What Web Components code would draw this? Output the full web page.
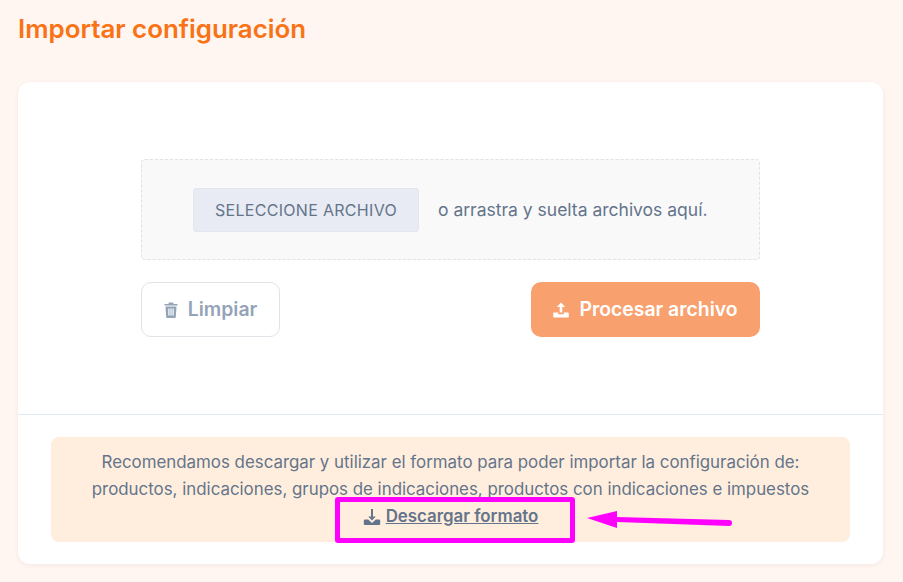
<!doctype html>
<html>
  <head>
    <style>
      html, body { margin: 0; height: 100%; }
      body { background: #fff5f1; font-family: Inter, "Liberation Sans", sans-serif; }
    </style>
  </head>
  <body>
    <template id="import-page">
      <style>
        :host { display: block; padding: 0 20px 18px 18px; position: relative; height: 582px; box-sizing: border-box; }
        h1 { margin: 0; height: 82px; padding-top: 13px; box-sizing: border-box; font-size: 25.9px; line-height: 32px; font-weight: 600; color: #f97316; }
      </style>
      <h1>Importar configuración</h1>
      <import-card></import-card>
    </template>

    <template id="import-card">
      <style>
        :host { display: block; background: #fff; border-radius: 12px; box-shadow: 0 1px 4px rgba(120, 90, 70, .08); height: 482px; position: relative; }
        .top { height: 333px; box-sizing: border-box; padding: 77px 123px 0; border-bottom: 1px solid #e2e8f0; }
        .actions { display: flex; justify-content: space-between; margin-top: 22px; }
        .bottom { padding: 22px 33px; }
      </style>
      <div class="top">
        <drop-zone></drop-zone>
        <div class="actions">
          <action-button kind="clear">Limpiar</action-button>
          <action-button kind="process">Procesar archivo</action-button>
        </div>
      </div>
      <div class="bottom">
        <format-notice></format-notice>
      </div>
    </template>

    <template id="drop-zone">
      <style>
        :host { display: flex; align-items: center; box-sizing: border-box; height: 101px; padding-left: 51px; background: #f9f9f9; border: 1px dashed #e2e2e6; border-radius: 4px; font-size: 17.5px; color: #64748b; }
        button { all: unset; box-sizing: border-box; width: 226px; height: 44px; text-align: center; line-height: 42px; background: #e8ebf3; border: 1px solid #e2e6ee; border-radius: 3px; font-size: 16px; letter-spacing: .3px; color: #64748b; }
        span { margin-left: 19px; }
      </style>
      <button>SELECCIONE ARCHIVO</button>
      <span>o arrastra y suelta archivos aquí.</span>
    </template>

    <template id="action-button">
      <style>
        :host { display: inline-flex; align-items: center; justify-content: center; box-sizing: border-box; height: 55px; padding-bottom: 2px; gap: 10px; border-radius: 10px; font-size: 19.4px; font-weight: 600; }
        :host([kind=clear]) { width: 139px; background: #fff; border: 1px solid #e2e2e8; color: #94a3b8; }
        :host([kind=process]) { width: 229px; background: #f9a06f; color: #fff; }
        svg { width: 16px; height: 16px; fill: currentColor; display: block; margin-top: 2px; }
        :host([kind=clear]) svg { width: 14px; height: 16px; }
      </style>
      <svg id="icon" viewBox="0 0 16 16"></svg>
      <slot></slot>
    </template>

    <template id="format-notice">
      <style>
        :host { display: block; background: #ffeedd; border-radius: 8px; height: 105px; box-sizing: border-box; padding-top: 12px; text-align: center; font-size: 16.87px; line-height: 27px; color: #64748b; position: relative; }
        p { margin: 0; white-space: nowrap; }
        a { display: inline-flex; align-items: center; gap: 5px; font-weight: 600; color: #64748b; }
        a span { text-decoration: underline; }
        svg { width: 18px; height: 18px; fill: currentColor; }
        .mark { position: absolute; left: 284px; top: 60px; width: 240px; height: 46px; box-sizing: border-box; border: 5px solid #ff00ff; border-radius: 3px; }
        .arrow { position: absolute; left: 530px; top: 64px; width: 160px; height: 30px; }
      </style>
      <p>Recomendamos descargar y utilizar el formato para poder importar la configuración de:<br>productos, indicaciones, grupos de indicaciones, productos con indicaciones e impuestos</p>
      <a>
        <svg viewBox="0 0 18 18"><path d="M8 1h2v7.500h2.800L9 12.500 5.200 8.500H8z"/><path d="M2 11.500h3.200L9 15l3.800-3.500H16a1.200 1.200 0 0 1 1.200 1.200v3.100A1.200 1.200 0 0 1 16 17H2a1.200 1.200 0 0 1-1.200-1.200v-3.100A1.200 1.200 0 0 1 2 11.500z"/></svg>
        <span>Descargar formato</span>
      </a>
      <div class="mark"></div>
      <svg class="arrow" viewBox="0 0 160 30"><path d="M6 17 36 10v6L148 19a3 3 0 0 1 0 6L36 21v6z" fill="#ff00ff"/></svg>
    </template>

    <script>
      class TemplateElement extends HTMLElement {
        constructor(templateId) {
          super();
          const shadowRoot = this.attachShadow({mode: 'open'});
          shadowRoot.appendChild(document.querySelector('#' + templateId).content.cloneNode(true));
        }
      }
      customElements.define('import-page', class extends TemplateElement {
        constructor() { super('import-page'); }
      });
      customElements.define('import-card', class extends TemplateElement {
        constructor() { super('import-card'); }
      });
      customElements.define('drop-zone', class extends TemplateElement {
        constructor() { super('drop-zone'); }
      });
      customElements.define('format-notice', class extends TemplateElement {
        constructor() { super('format-notice'); }
      });
      const ICONS = {
        clear: '<path d="M5 0.500h4l.6 1.500H13.500v1.600H.5V2h3.900zM1.500 4.500h11l-.7 10.500a1 1 0 0 1-1 1H3.200a1 1 0 0 1-1-1zM4.300 6.500v7h1.200v-7zM6.400 6.500v7h1.200v-7zM8.500 6.500v7h1.200v-7z" fill-rule="evenodd"/>',
        process: '<path d="M8 .5l4.200 4.600H9.300v5.400H6.700V5.100H3.800z"/><path d="M1 10.500h4.200v1.800h5.600v-1.800H15a.8.800 0 0 1 .8.8v3.400a.8.800 0 0 1-.8.800H1a.8.800 0 0 1-.8-.8v-3.400a.8.800 0 0 1 .8-.8z"/>'
      };
      customElements.define('action-button', class extends TemplateElement {
        constructor() { super('action-button'); }
        connectedCallback() {
          const icon = this.shadowRoot.querySelector('#icon');
          const kind = this.getAttribute('kind');
          if (kind === 'clear') icon.setAttribute('viewBox', '0 0 14 16');
          icon.innerHTML = ICONS[kind];
        }
      });
    </script>

    <import-page></import-page>
  </body>
</html>
